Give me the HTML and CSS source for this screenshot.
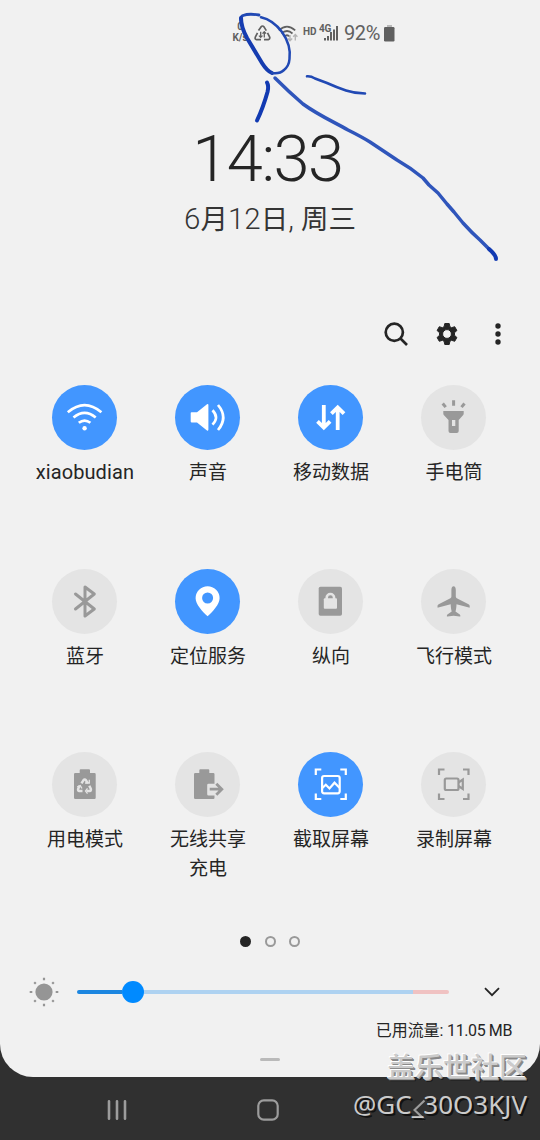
FILE: index.html
```html
<!DOCTYPE html>
<html lang="zh-CN">
<head>
<meta charset="utf-8">
<title>快捷面板</title>
<link rel="stylesheet" href="styles.css">
</head>
<body>
<div class="screen">
  <main class="panel">
    <header class="status">
      <div class="speed"><span>0</span><span>K/s</span></div>
      <svg class="s-recycle" width="17" height="17" viewBox="0 0 17 17" fill="none" stroke="#606060" stroke-width="1.7" stroke-linejoin="round"><path d="M4.500 5.600 7 1.900q1.500-1.800 3 0l2.300 3.700M13.500 7.800l2.200 4.400q.5 2-1.400 2.500H10M7 14.700H2.600Q.6 14.200 1.300 12.200l2.200-4.400"/><path stroke-width="1.300" d="M6.700 6.800v5.600M4.900 10.600l1.800 1.800 1.800-1.800M10.300 12.400V6.800M8.500 8.600l1.800-1.800 1.800 1.800"/></svg>
      <svg class="s-wifi" width="20" height="18" viewBox="0 0 20 18" fill="none" stroke="#606060" stroke-width="1.700"><path d="M.8 5.400Q9 -2.200 17.200 5.400M3.500 8.500Q9 3.500 14.500 8.500M6.200 11.500Q9 9 11.700 11.500"/><path stroke="#b5b5b5" stroke-width="1.400" d="M12 10v5.500M9.800 13.500 12 15.700l2.200-2.200M17.300 15.500V9.500M15.200 11.700l2.100-2.200 2.100 2.200"/></svg>
      <span class="hd">HD</span>
      <div class="cell"><span class="gen">4G</span><svg width="15" height="15" viewBox="0 0 15 15" fill="#606060"><path d="M0 12h2v2.500H0zM3 10h2v4.500H3zM6 6h2v8.500H6zM9 3.500h2v11H9zM12 0h2v14.500h-2z"/></svg></div>
      <span class="pct">92%</span>
      <svg class="s-batt" width="11" height="17" viewBox="0 0 11 17"><path fill="#b9b9b9" d="M3 0h5v3H3z"/><rect y="2" width="10.500" height="14.500" rx="1.200" fill="#606060"/></svg>
    </header>

    <div class="clock">14:33</div>
    <div class="date"><b>6</b>月<b>12</b>日<b>, </b>周三</div>

    <div class="actions">
      <svg width="26" height="26" viewBox="0 0 26 26" fill="none" stroke="#252525" stroke-width="2.700"><circle cx="11.300" cy="11.300" r="8.600"/><path d="M17.500 17.500 24 24"/></svg>
      <svg width="24" height="24" viewBox="0 0 24 24"><path fill="#252525" fill-rule="evenodd" stroke="#252525" stroke-width="1" stroke-linejoin="round" d="M9.800 1.500h4.400l.7 3.200 1.700 1 3.100-1 2.200 3.800-2.400 2.200v2.600l2.400 2.200-2.200 3.800-3.100-1-1.700 1-.7 3.200H9.800l-.7-3.200-1.700-1-3.100 1-2.200-3.800 2.400-2.200v-2.600L2.100 8.500l2.200-3.800 3.100 1 1.700-1zM12 7.600a4.400 4.400 0 1 0 0 8.800 4.400 4.400 0 0 0 0-8.800z"/></svg>
      <svg width="6" height="24" viewBox="0 0 6 24" fill="#252525"><circle cx="3" cy="4" r="2.700"/><circle cx="3" cy="12" r="2.700"/><circle cx="3" cy="20" r="2.700"/></svg>
    </div>

    <section class="tiles">
      <div class="tile"><div class="disc on"><svg viewBox="0 0 65 65" class="line" stroke-width="2.700"><path d="M15.800 27.300Q32.600 13 49.400 27.300M21.500 32.500Q32.600 23.300 43.700 32.500M26.800 37.800Q32.600 33.300 38.400 37.800"/><circle cx="32.600" cy="43.300" r="2.200" fill="currentColor" stroke="none"/></svg></div><span class="latin">xiaobudian</span></div>
      <div class="tile"><div class="disc on"><svg viewBox="0 0 65 65" class="line" stroke-width="2.700"><path fill="currentColor" stroke="none" d="M16.500 27.300H22L32 19.200q1.400-.8 1.400.8v24.600q0 1.600-1.400.8L22 37.400h-5.500q-.8 0-.8-.8v-8.500q0-.8.8-.8z"/><path d="M37.500 25.200q7 7.200 0 14.400M43 20q10.500 12.500 0 25"/></svg></div><span>声音</span></div>
      <div class="tile"><div class="disc on"><svg viewBox="0 0 65 65" class="line" stroke-width="3.800"><path d="M25.800 20v23M19.500 36.300l6.300 6.300 6.300-6.300M39.700 45V22M33.400 28.700l6.300-6.300 6.300 6.300"/></svg></div><span>移动数据</span></div>
      <div class="tile"><div class="disc"><svg viewBox="0 0 65 65" class="line" stroke-width="3"><path fill="currentColor" stroke="none" fill-rule="evenodd" d="M22.300 26h20.400v2.500q0 1-.7 1.700L37.700 35v11q0 2-2 2h-6.200q-2 0-2-2V35L23 30.200q-.7-.7-.7-1.700zM31 35v6h3.300v-6z"/><path d="M32.600 15.300v5.500M21.700 18.500l3 3.600M43.500 18.500l-3 3.600"/></svg></div><span>手电筒</span></div>

      <div class="tile"><div class="disc"><svg viewBox="0 0 65 65" class="line" stroke-width="3" stroke-linecap="round" stroke-linejoin="round"><path d="M23.500 25 42.300 40 33 47V18l9.300 7L23.500 40"/></svg></div><span>蓝牙</span></div>
      <div class="tile"><div class="disc on"><svg viewBox="0 0 65 65"><path fill="currentColor" fill-rule="evenodd" d="M32.600 17.200a12 12 0 0 1 12 12c0 6-7 13.500-12 18-5-4.500-12-12-12-18a12 12 0 0 1 12-12zm0 6.300a5.500 5.500 0 1 0 0 11 5.500 5.500 0 0 0 0-11z"/></svg></div><span>定位服务</span></div>
      <div class="tile"><div class="disc"><svg viewBox="0 0 65 65"><rect x="20.700" y="17.700" width="23.300" height="29" rx="1.800" fill="currentColor"/><rect x="25.800" y="29.300" width="13.200" height="10.500" rx="1" fill="#e4e4e4"/><path d="M28.700 30v-1.300a3.700 3.700 0 0 1 7.400 0V30" fill="none" stroke="#e4e4e4" stroke-width="2.600"/></svg></div><span>纵向</span></div>
      <div class="tile"><div class="disc"><svg viewBox="0 0 65 65"><path fill="currentColor" d="M32.600 17.200c1.400 0 2.200 1.700 2.200 3.700v6.600c0 .8.300 1.300 1 1.700l11.700 6q1.200.7 1.200 1.700v1.300q0 .6-.8.400l-12.400-3.300c0 3-.5 5.200-1 7.200l4.300 3q.5.400.5 1.100v.6q0 .5-.6.400l-6.100-.9-6.100.9q-.6.100-.6-.4v-.6q0-.7.500-1.100l4.300-3c-.5-2-1-4.200-1-7.200l-12.400 3.300q-.8.200-.8-.4v-1.300q0-1 1.200-1.700l11.700-6c.7-.4 1-.9 1-1.700v-6.600c0-2 .8-3.700 2.200-3.700z"/></svg></div><span>飞行模式</span></div>

      <div class="tile"><div class="disc"><svg viewBox="0 0 65 65"><path fill="currentColor" d="M27.700 18.300q0-1 1-1H37q1 0 1 1V21h4.500q1.200 0 1.200 1.200v23.600q0 1.200-1.200 1.200H23.200Q22 47 22 45.800V22.200Q22 21 23.200 21h4.500z"/><path fill="none" stroke="#e4e4e4" stroke-width="2.500" stroke-linejoin="round" d="M29.500 31.300l1.900-3q1.300-1.700 2.600 0l1.900 3M37.300 33.700l1.500 3q.6 2-1.300 2.400h-3M30.500 39.100h-3q-1.900-.4-1.300-2.400l1.500-3"/><path fill="none" stroke="#e4e4e4" stroke-width="1.300" d="M33 31h4.300v-3.300M35.500 36.400l-2 2.700 2 2.500M25.200 34.800l3.100-1.200 1.700 2.900"/></svg></div><span>用电模式</span></div>
      <div class="tile"><div class="disc"><svg viewBox="0 0 65 65"><path fill="currentColor" d="M24.300 18.300q0-1 1-1h8q1 0 1 1V21h4q1.200 0 1.200 1.200v9.500h-6q-1.300 0-1.300 1.300v9.300q0 1.300 1.300 1.300h6v2.200q0 1.200-1.200 1.200H20.200Q19 47 19 45.800V22.200Q19 21 20.200 21h4.100z"/><path fill="none" stroke="currentColor" stroke-width="2.800" d="M34.700 37.200h12M41.300 31.700l5.500 5.500-5.500 5.500"/></svg></div><span>无线共享<br>充电</span></div>
      <div class="tile"><div class="disc on"><svg viewBox="0 0 65 65" class="line" stroke-width="2.200"><path d="M17.800 23v-5.500h5.500M42.300 17.500h5.500V23M47.800 41.500V47h-5.500M23.300 47h-5.500v-5.500"/><rect x="24.100" y="24" width="17.600" height="17.300" rx="2"/><path d="M24.300 36l3.500-3.200 3.700 3.700 5-5.800 5 5"/></svg></div><span>截取屏幕</span></div>
      <div class="tile"><div class="disc"><svg viewBox="0 0 65 65" class="line" stroke-width="2.200"><path d="M18 23v-5.500h5.500M42 17.500h5.500V23M47.500 41.500V47H42M23.500 47H18v-5.500"/><rect x="23.800" y="26.500" width="13.700" height="11.500" rx="1.500"/><path d="M37.500 30.500l4.300-3v9.500l-4.300-3"/></svg></div><span>录制屏幕</span></div>
    </section>

    <div class="dots"><i class="dot current"></i><i class="dot"></i><i class="dot"></i></div>

    <div class="brightness">
      <svg width="30" height="30" viewBox="0 0 30 30"><circle cx="15" cy="15" r="8.600" fill="#959595"/><path fill="none" stroke="#959595" stroke-width="2.200" d="M15 .7v2.600M15 26.700v2.600M.7 15h2.600M26.700 15h2.600M5.200 5.200l1.600 1.600M23.200 23.200l1.600 1.600M5.200 24.800l1.600-1.600M23.200 6.800l1.600-1.600"/></svg>
      <div class="track"><div class="filled"></div><div class="knob"></div><div class="rest"></div><div class="hot"></div></div>
      <svg class="chev" width="16" height="10" viewBox="0 0 16 10" fill="none" stroke="#252525" stroke-width="1.800"><path d="M1 1.200 8 8.200l7-7"/></svg>
    </div>

    <div class="usage">已用流量: <span>11.05 MB</span></div>
    <div class="handle"></div>
  </main>

  <nav class="nav">
    <svg width="20" height="22" viewBox="0 0 20 22" stroke="#9c9c9c" stroke-width="2.600" stroke-linecap="round"><path d="M2 2.300v17.400M10 2.300v17.400M18 2.300v17.400"/></svg>
    <svg width="22" height="22" viewBox="0 0 22 22" fill="none" stroke="#9c9c9c" stroke-width="2.200"><rect x="1.300" y="1.300" width="19.400" height="19.400" rx="5.500"/></svg>
    <svg width="13" height="22" viewBox="0 0 13 22" fill="none" stroke="#9c9c9c" stroke-width="2.200"><path d="M11.500 1.500 1.500 11l10 9.500"/></svg>
  </nav>

  <div class="watermark"><span class="community">盖乐世社区</span><span class="user">@GC_30O3KJV</span></div>

  <svg class="ink" width="540" height="280" viewBox="0 0 540 280" fill="none" stroke="#2f55bb" stroke-linecap="round" stroke-linejoin="round">
    <path stroke-width="2.800" stroke="#2149b4" d="M259 15C253 14 247 14 243 15.500Q240 17 241 21"/>
    <path stroke-width="4" stroke="#153cb0" d="M241 18Q241 27 247 38L262 63Q267 71 272 73"/>
    <path stroke-width="2.500" stroke="#2149b4" d="M272 73Q280 74 284 70 289 66 289.500 59C291 48 287 39 282 32Q273 20 261 17.300"/>
    <path stroke-width="4" stroke="#123ab2" d="M267 82.500Q269 86 267.500 92 263 108 257 120.500"/>
    <path stroke-width="3.500" d="M275 78Q289 92 303 104C318 115 334 122 348 130Q362 137 370 142L397 160Q411 168 423 178L429 185 438 193 447 204 454 212 463 223Q472 233 480 240L490 250"/>
    <path stroke-width="4" stroke="#123ab2" d="M489 249Q496 255 496 259"/>
    <path stroke-width="2.600" stroke="#2149b4" d="M307 76.300Q311 76 315 78.500L327 83Q337 87.500 346 90.500T365 93.500"/>
  </svg>
</div>
</body>
</html>
```
FILE: styles.css
```css
* { box-sizing: border-box; }
body { margin: 0; background: #303030; font-family: Roboto, "Noto Sans CJK SC", sans-serif; color: #252525; }
svg { display: block; flex: none; }
.screen { position: relative; width: 540px; height: 1140px; overflow: hidden; background: #303030; }
.panel { height: 1077px; background: #f1f1f1; border-radius: 0 0 33px 33px; display: flex; flex-direction: column; }
.status { display: flex; align-items: flex-start; height: 50px; padding: 21px 0 0 232px; color: #606060; }
.speed { display: flex; flex-direction: column; align-items: center; width: 16px; font-size: 10px; font-weight: 700; line-height: 11px; margin-right: 6px; }
.s-recycle { margin-top: 4px; }
.s-wifi { margin: 4px 0 0 7px; }
.hd { width: 17px; margin-left: 5px; font-size: 10px; line-height: 12px; font-weight: 700; padding-top: 5px; white-space: nowrap; }
.cell { position: relative; width: 19px; padding: 5px 0 0 4px; }
.gen { position: absolute; left: -1px; top: 2px; font-size: 10px; line-height: 11px; font-weight: 700; letter-spacing: -0.3px; }
.pct { width: 37px; margin-left: 5px; font-size: 20px; line-height: 25px; letter-spacing: -0.4px; }
.s-batt { margin: 4px 0 0 3px; }
.clock { margin-top: 70px; padding-right: 5px; text-align: center; font-size: 65px; line-height: 78px; font-weight: 300; letter-spacing: -1.500px; }
.date { height: 41px; margin-top: 1px; text-align: center; font-size: 27.500px; line-height: 40px; font-weight: 400; color: #353535; }
.date b { font-weight: 300; font-size: 29.500px; }
.actions { display: flex; justify-content: flex-end; align-items: center; height: 26px; margin-top: 81px; padding-right: 39px; }
.actions svg:nth-child(2) { margin: 0 36px 0 26px; }
.tiles { display: grid; grid-template-columns: repeat(4, 123px); grid-auto-rows: 183.500px; margin: 38px 0 0 23.400px; height: 548px; }
.tile { display: flex; flex-direction: column; align-items: center; text-align: center; font-size: 19px; line-height: 29px; }
.tile span { margin-top: 8px; }
.disc { width: 65px; height: 65px; border-radius: 50%; background: #e4e4e4; color: #999; }
.disc.on { background: #4296ff; color: #fff; }
.line { fill: none; stroke: currentColor; }
.tile .latin { font-size: 20px; letter-spacing: 0.100px; }
.dots { display: flex; justify-content: center; gap: 13.500px; height: 11px; margin-top: 3px; }
.dot { width: 11px; height: 11px; border: 2px solid #999; border-radius: 50%; }
.dot.current { background: #252525; border-color: #252525; }
.brightness { display: flex; align-items: center; height: 30px; margin: 29.500px 0 0 29.400px; }
.track { display: flex; align-items: center; width: 372px; margin: 0 35px 0 18px; }
.filled { width: 44.500px; height: 4px; border-radius: 2px 0 0 2px; background: #1c86e0; }
.knob { width: 22px; height: 22px; border-radius: 50%; background: #008aff; }
.rest { flex: 1; height: 4px; background: #aed2f1; }
.hot { width: 36px; height: 4px; border-radius: 0 2px 2px 0; background: #f0c2c2; }
.usage { margin: 13.500px 28px 0 0; text-align: right; font-size: 16px; line-height: 22px; letter-spacing: -0.100px; }
.usage span { letter-spacing: -0.400px; }
.handle { width: 20px; height: 3px; margin: 15.500px auto 0; border-radius: 2px; background: #bababa; }
.nav { display: flex; height: 63px; align-items: center; padding: 2px 0 0 107.400px; }
.nav svg:nth-child(2) { margin-left: 130px; }
.nav svg:nth-child(3) { margin-left: 134px; }
.watermark { position: absolute; right: 13px; top: 1051px; display: flex; flex-direction: column; align-items: flex-end; color: #cbcbcb; white-space: nowrap; }
.community { font-size: 28px; line-height: 36px; font-weight: 500; text-shadow: -1px -1px 0 #fff, 1px 1px 0 #8b8b8b, 2px 2px 0 rgba(0, 0, 0, .45); }
.user { font-family: "Noto Sans", "Noto Sans CJK SC", sans-serif; font-size: 26px; line-height: 34px; text-shadow: 2px 2px 0 #111; }
.ink { position: absolute; left: 0; top: 0; }
```
